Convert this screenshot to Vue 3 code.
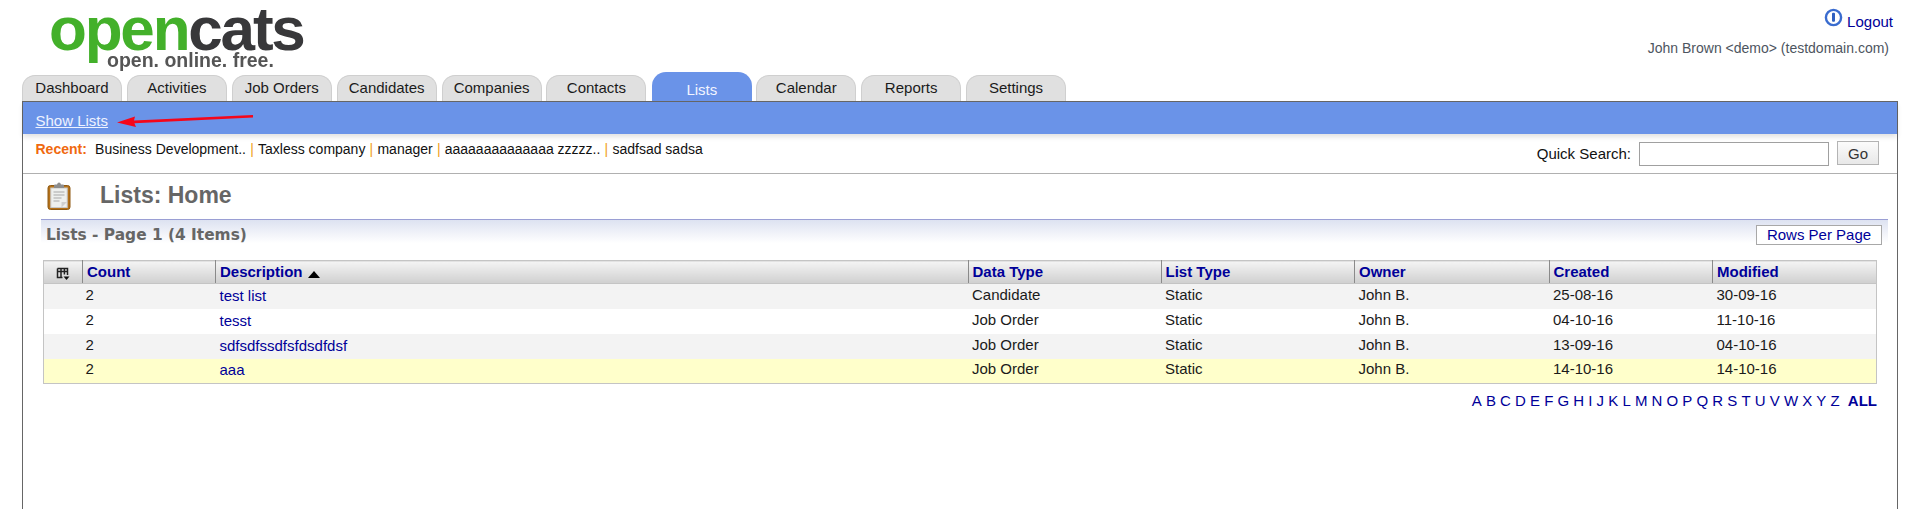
<script setup>
const tabs = ['Dashboard', 'Activities', 'Job Orders', 'Candidates', 'Companies', 'Contacts', 'Lists', 'Calendar', 'Reports', 'Settings']
const recents = ['Business Development..', 'Taxless company', 'manager', 'aaaaaaaaaaaaaa zzzzz..', 'sadfsad sadsa']
const columns = ['Data Type', 'List Type', 'Owner', 'Created', 'Modified']
const rows = [
  { count: 2, desc: 'test list', type: 'Candidate', list: 'Static', owner: 'John B.', created: '25-08-16', modified: '30-09-16', cls: 'odd' },
  { count: 2, desc: 'tesst', type: 'Job Order', list: 'Static', owner: 'John B.', created: '04-10-16', modified: '11-10-16', cls: 'even' },
  { count: 2, desc: 'sdfsdfssdfsfdsdfdsf', type: 'Job Order', list: 'Static', owner: 'John B.', created: '13-09-16', modified: '04-10-16', cls: 'odd' },
  { count: 2, desc: 'aaa', type: 'Job Order', list: 'Static', owner: 'John B.', created: '14-10-16', modified: '14-10-16', cls: 'hl' }
]
const letters = 'ABCDEFGHIJKLMNOPQRSTUVWXYZ'.split('')
</script>

<template>
  <div class="page">
    <header class="top">
      <div class="logo">
        <div class="logo-main"><span class="green">open</span><span class="dark">cats</span></div>
        <div class="logo-sub">open. online. free.</div>
      </div>
      <div class="user">
        <div class="logout">
          <svg class="logout-icon" width="19" height="19" viewBox="0 0 19 19">
            <circle cx="9.5" cy="9.5" r="7.6" fill="#fff" stroke="#3a6ccf" stroke-width="2.4" />
            <rect x="8" y="4.8" width="3" height="9" rx="1" fill="#2f5fc0" />
          </svg>
          <a class="logout-link">Logout</a>
        </div>
        <div class="who">John Brown &lt;demo&gt; (testdomain.com)</div>
      </div>
    </header>

    <nav class="tabs">
      <div v-for="t in tabs" :key="t" class="tab" :class="{ active: t === 'Lists' }">{{ t }}</div>
    </nav>

    <main class="main">
      <div class="subnav">
        <a class="show">Show Lists</a>
        <svg class="arrow" width="140" height="16" viewBox="0 0 140 16">
          <path d="M137 2 L18 7.4 L19 3.4 L1 9.6 L20 14 L18.4 10.2 L137 4.6 Z" fill="#f5061a" />
        </svg>
      </div>

      <div class="recent-row">
        <div class="recent">
          <b class="recent-label">Recent:</b>
          <template v-for="(r, i) in recents" :key="r">
            <span v-if="i" class="pipe">|</span>
            <span>{{ r }}</span>
          </template>
        </div>
        <div class="search">
          <span class="search-label">Quick Search:</span>
          <div class="search-input"></div>
          <div class="go">Go</div>
        </div>
      </div>

      <div class="title-row">
        <svg class="clip" width="24" height="28" viewBox="0 0 24 28">
          <rect x="1" y="3.5" width="22" height="24" rx="2.5" fill="#b5721a" stroke="#8f5a14" />
          <rect x="3.8" y="6" width="16.4" height="19.5" fill="#eef0ee" stroke="#c8c8c8" />
          <path d="M6.5 10h11M6.5 13h11M6.5 16h8M6.5 19h6" stroke="#a8a8a8" stroke-width="1.2" />
          <path d="M14.5 25.5l5.5-5.5h-5.5z" fill="#cfcfcf" />
          <path d="M7 6V3.5q0-1 1-1h2q.5-2 2-2t2 2h2q1 0 1 1V6z" fill="#8d8d8d" />
        </svg>
        <h1 class="title">Lists: Home</h1>
      </div>

      <div class="list-head">
        <div class="list-title">Lists - Page 1 (4 Items)</div>
        <div class="rows-btn">Rows Per Page</div>
      </div>

      <table class="grid">
        <colgroup>
          <col class="c1" />
          <col class="c2" />
          <col class="c3" />
          <col class="c4" />
          <col class="c5" />
          <col class="c6" />
          <col class="c7" />
          <col />
        </colgroup>
        <thead>
          <tr>
            <th class="icon-cell">
              <svg width="14" height="14" viewBox="0 0 14 14">
                <path d="M1.5 1.5h10v6.5M1.5 1.5v9h5M1.5 4.5h10M5 1.5v9M8.4 1.5v6" fill="none" stroke="#222" stroke-width="1.5" />
                <path d="M7.5 9.5h6l-3 3.5z" fill="#111" />
              </svg>
            </th>
            <th>Count</th>
            <th>Description <span class="sort"></span></th>
            <th v-for="c in columns" :key="c">{{ c }}</th>
          </tr>
        </thead>
        <tbody>
          <tr v-for="r in rows" :key="r.desc" :class="r.cls">
            <td></td>
            <td class="num">{{ r.count }}</td>
            <td><a class="link">{{ r.desc }}</a></td>
            <td>{{ r.type }}</td>
            <td>{{ r.list }}</td>
            <td>{{ r.owner }}</td>
            <td>{{ r.created }}</td>
            <td>{{ r.modified }}</td>
          </tr>
        </tbody>
      </table>

      <div class="alpha">
        <span v-for="l in letters" :key="l">{{ l }}</span>
        <b class="all">ALL</b>
      </div>
    </main>
  </div>
</template>

<style>
html, body { margin: 0; background: #fff; overflow: hidden; }
</style>

<style scoped>
.page {
  width: 1915px;
  height: 509px;
  overflow: hidden;
  box-sizing: border-box;
  padding: 0 17px 0 22px;
  font-family: "Liberation Sans", Arial, sans-serif;
  font-size: 15px;
  color: #111;
  background: #fff;
}
.top { height: 73px; display: flex; justify-content: space-between; }
.logo { margin-left: 27px; width: 262px; padding-top: 4px; filter: blur(0.45px); }
.logo-main { font-size: 62px; font-weight: 700; line-height: 50px; letter-spacing: -2.2px; height: 47px; }
.green { color: #43b02a; }
.dark { color: #38383a; letter-spacing: -2.2px; }
.logo-sub { margin-left: 58px; font-size: 19.5px; font-weight: 700; line-height: 18px; color: #555; letter-spacing: 0; }
.user { display: flex; flex-direction: column; align-items: flex-end; }
.logout { display: flex; align-items: flex-start; height: 34px; padding-top: 8px; box-sizing: border-box; }
.logout-icon { margin-right: 4px; }
.logout-link { color: #000099; line-height: 28px; margin-right: 5px; font-size: 15px; }
.who { color: #4d5560; line-height: 17px; font-size: 14px; margin-top: 6px; margin-right: 9px; white-space: nowrap; }

.tabs { display: flex; gap: 4.9px; height: 28px; align-items: flex-end; }
.tab {
  width: 100px;
  height: 26px;
  box-sizing: border-box;
  border: 1.5px solid #cfcfcf;
  border-bottom: 0;
  border-radius: 13px 13px 0 0;
  background: #e0e0e0;
  text-align: center;
  line-height: 24px;
  color: #1b1b1b;
}
.tab.active {
  height: 29px;
  border: 0;
  margin: 0 -0.5px 0 0.5px;
  background: #6a93e8;
  color: #f2f5ff;
  line-height: 36px;
  border-radius: 14px 14px 0 0;
  position: relative;
  z-index: 1;
}

.main {
  border: 1px solid #666;
  border-bottom: 0;
  height: 408px;
  box-sizing: border-box;
}
.subnav {
  height: 32px;
  background: #6a93e8;
  position: relative;
  padding-left: 12.5px;
  line-height: 38px;
  box-shadow: 0 3px 5px rgba(0, 0, 0, 0.12);
}
.show { color: #eef2ff; text-decoration: underline; }
.arrow { position: absolute; left: 93px; top: 11px; }

.recent-row {
  height: 39px;
  border-bottom: 1px solid #b0b0b0;
  display: flex;
  justify-content: space-between;
}
.recent { padding: 7px 0 0 12.5px; line-height: 17px; white-space: pre; display: flex; height: 17px; font-size: 14px; }
.recent-label { color: #f0690f; margin-right: 8.2px; }
.pipe { color: #f0a020; margin: 0 4.2px; }
.search { display: flex; align-items: flex-start; padding: 7px 18px 0 0; }
.search-label { line-height: 23px; margin-right: 8px; margin-top: 1px; }
.search-input { width: 188px; height: 22px; border: 1px solid #a0a0a0; background: #fff; margin-top: 1px; }
.go {
  width: 40px;
  height: 22px;
  margin-left: 8px;
  border: 1px solid #b4b4b4;
  background: linear-gradient(#fbfbfb, #e8e8e8);
  text-align: center;
  line-height: 23px;
  color: #333;
}

.title-row { height: 45px; display: flex; align-items: flex-start; padding-left: 24px; }
.clip { margin-top: 8px; }
.title { margin: 8px 0 0 29px; font-size: 23px; line-height: 26px; font-weight: 700; color: #666; }

.list-head {
  margin: 0 9px 0 18px;
  height: 40px;
  border-top: 1px solid #9a9fd4;
  background: linear-gradient(#dde2f1, #ffffff 58%);
  display: flex;
  justify-content: space-between;
}
.list-title {
  font-family: "DejaVu Sans", sans-serif;
  font-weight: 700;
  font-size: 15.4px;
  color: #666;
  padding: 5px 0 0 5px;
  line-height: 20px;
}
.rows-btn {
  height: 18px;
  margin: 5px 6px 0 0;
  width: 124px;
  border: 1px solid #a8a8a8;
  background: #fff;
  color: #000099;
  text-align: center;
  line-height: 18px;
}

.grid {
  margin-left: 20px;
  width: 1834px;
  table-layout: fixed;
  border-collapse: collapse;
  border: 1px solid #c4c4c4;
  font-size: 15px;
}
.c1 { width: 39px; }
.c2 { width: 133px; }
.c3 { width: 752.5px; }
.c4 { width: 193px; }
.c5 { width: 193.5px; }
.c6 { width: 194.5px; }
.c7 { width: 163.5px; }
.grid th {
  height: 20px;
  padding: 0 0 0 4px;
  text-align: left;
  color: #000099;
  font-weight: 700;
  background: linear-gradient(#f4f4f4, #cfcfcf);
  border-left: 1px solid #8a8a8a;
  border-bottom: 1px solid #c4c4c4;
  line-height: 20px;
}
.grid th:first-child { border-left: 0; }
.grid th.icon-cell { text-align: center; padding: 2px 0 0; }
.icon-cell svg { display: block; margin: 1px auto 0; }
.sort {
  display: inline-block;
  width: 0;
  height: 0;
  border-left: 6px solid transparent;
  border-right: 6px solid transparent;
  border-bottom: 7px solid #000;
  margin-left: 1px;
  vertical-align: -1px;
}
.grid td { height: 25px; padding: 0 0 3px 4px; line-height: 20px; box-sizing: border-box; color: #1a1a1a; }
.grid td.num { padding-left: 3px; }
.grid .odd td { background: #f3f3f3; }
.grid .even td { background: #fff; }
.grid .hl td { background: #ffffcb; }
.link { color: #000099; position: relative; top: 1px; }

.alpha {
  display: flex;
  justify-content: flex-end;
  gap: 4.15px;
  margin: 8px 20px 0 0;
  color: #000099;
  line-height: 17px;
}
.all { margin-left: 4px; }
</style>
